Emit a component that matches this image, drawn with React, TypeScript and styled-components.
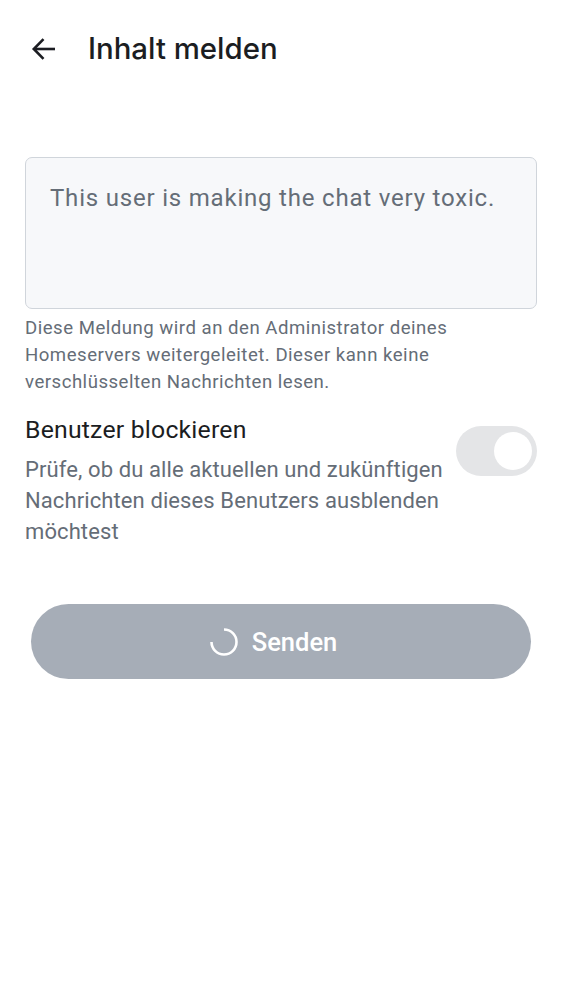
import React from "react";
import styled, { createGlobalStyle } from "styled-components";

const Global = createGlobalStyle`
  html, body { margin: 0; padding: 0; background: #ffffff; }
  body { font-family: Roboto, "Noto Sans", sans-serif; -webkit-font-smoothing: antialiased; }
`;

const Page = styled.div`
  width: 562px;
  min-height: 1000px;
  background: #ffffff;
  display: flex;
  flex-direction: column;
`;

const TopBar = styled.header`
  height: 98px;
  display: flex;
  align-items: center;
  padding-left: 22px;
  gap: 22px;
`;

const BackButton = styled.button`
  width: 44px;
  height: 44px;
  border: none;
  background: transparent;
  padding: 0;
  display: flex;
  align-items: center;
  justify-content: center;
  color: #1b1d22;
`;

const Title = styled.h1`
  margin: 0;
  font-family: Inter, Roboto, sans-serif;
  font-weight: 500;
  font-size: 29.4px;
  line-height: 36px;
  color: #1b1d22;
`;

const Content = styled.main`
  padding: 59px 25px 0 25px;
  display: flex;
  flex-direction: column;
`;

const ReasonBox = styled.div`
  box-sizing: border-box;
  height: 152px;
  background: #f7f8fa;
  border: 1.5px solid #d0d5db;
  border-radius: 7px;
  padding: 24px 24px;
  font-size: 24px;
  line-height: 32px;
  letter-spacing: 0.8px;
  color: #656d77;
`;

const Helper = styled.p`
  margin: 6px 0 0 0;
  font-size: 18.6px;
  line-height: 27px;
  letter-spacing: 0.5px;
  color: #656d77;
`;

const OptionRow = styled.div`
  display: flex;
  align-items: flex-start;
  margin-top: 18px;
`;

const OptionText = styled.div`
  flex: 1;
  display: flex;
  flex-direction: column;
`;

const OptionTitle = styled.div`
  font-size: 24.8px;
  line-height: 32px;
  letter-spacing: 0.2px;
  color: #1b1d22;
`;

const OptionDesc = styled.div`
  margin-top: 8px;
  font-size: 22px;
  line-height: 31px;
  letter-spacing: 0.1px;
  color: #656d77;
`;

const SwitchTrack = styled.div<{ $on?: boolean }>`
  flex: none;
  margin-top: 12px;
  margin-left: 8px;
  width: 81px;
  height: 50px;
  border-radius: 25px;
  background: ${(p) => (p.$on ? "#0467dd" : "#e4e5e7")};
  display: flex;
  align-items: center;
  justify-content: flex-end;
  padding: 0 5px;
  box-sizing: border-box;
`;

const SwitchKnob = styled.div`
  width: 38px;
  height: 38px;
  border-radius: 50%;
  background: #ffffff;
`;

const SendButton = styled.button`
  margin: 57px 6px 0 6px;
  height: 75px;
  border: none;
  border-radius: 38px;
  background: #a6adb7;
  color: #ffffff;
  display: flex;
  align-items: center;
  justify-content: center;
  gap: 12px;
  font-family: Roboto, sans-serif;
  font-weight: 500;
  font-size: 25.5px;
  padding: 0 17px 0 0;
`;

const Spinner = () => (
  <svg width="32" height="32" viewBox="0 0 32 32" fill="none">
    <path
      d="M16 3.5 A12.5 12.5 0 1 1 3.5 16"
      stroke="#ffffff"
      strokeWidth="2.6"
      strokeLinecap="butt"
    />
  </svg>
);

const BackArrow = () => (
  <svg width="26" height="26" viewBox="0 0 26 26" fill="none">
    <path d="M24 13H3" stroke="currentColor" strokeWidth="2.6" />
    <path d="M12.5 3.2 L2.8 13 L12.5 22.8" stroke="currentColor" strokeWidth="2.6" strokeLinejoin="miter" />
  </svg>
);

export default function App() {
  return (
    <Page>
      <Global />
      <TopBar>
        <BackButton aria-label="Zurück">
          <BackArrow />
        </BackButton>
        <Title>Inhalt melden</Title>
      </TopBar>
      <Content>
        <ReasonBox>This user is making the chat very toxic.</ReasonBox>
        <Helper>
          Diese Meldung wird an den Administrator deines Homeservers weitergeleitet. Dieser kann keine
          verschlüsselten Nachrichten lesen.
        </Helper>
        <OptionRow>
          <OptionText>
            <OptionTitle>Benutzer blockieren</OptionTitle>
            <OptionDesc>
              Prüfe, ob du alle aktuellen und zukünftigen Nachrichten dieses Benutzers ausblenden möchtest
            </OptionDesc>
          </OptionText>
          <SwitchTrack>
            <SwitchKnob />
          </SwitchTrack>
        </OptionRow>
        <SendButton>
          <Spinner />
          Senden
        </SendButton>
      </Content>
    </Page>
  );
}
